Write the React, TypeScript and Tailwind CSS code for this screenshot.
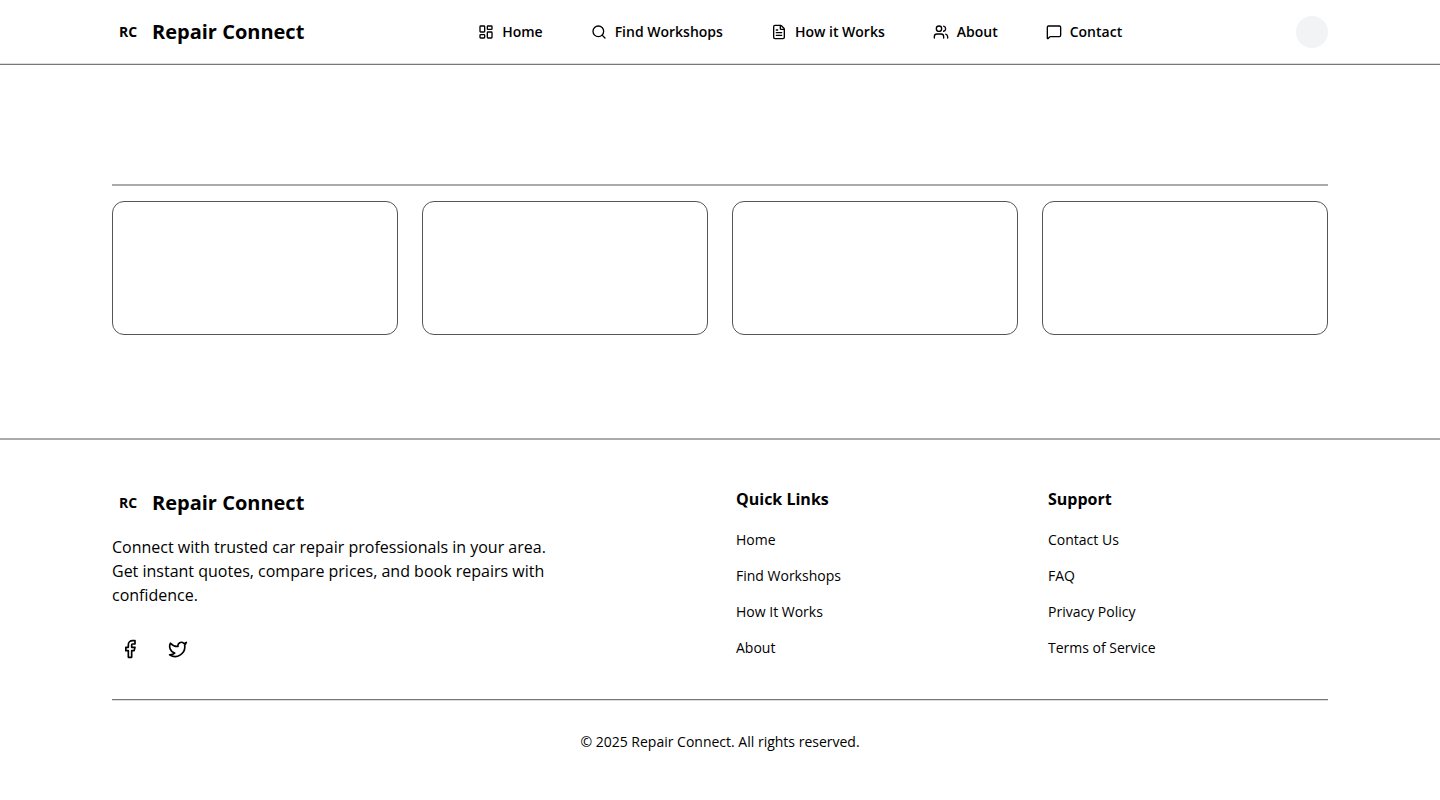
import React from "react";
import {
  LayoutDashboard,
  Search,
  FileText,
  Users,
  MessageSquare,
  Facebook,
  Twitter,
} from "lucide-react";

const navItems = [
  { label: "Home", icon: LayoutDashboard },
  { label: "Find Workshops", icon: Search },
  { label: "How it Works", icon: FileText },
  { label: "About", icon: Users },
  { label: "Contact", icon: MessageSquare },
];

const linkGroups = [
  { title: "Quick Links", links: ["Home", "Find Workshops", "How It Works", "About"] },
  { title: "Support", links: ["Contact Us", "FAQ", "Privacy Policy", "Terms of Service"] },
];

function Brand() {
  return (
    <a href="#" className="flex items-center gap-2">
      <span className="flex size-8 items-center justify-center text-sm font-bold">RC</span>
      <span className="text-xl font-bold">Repair Connect</span>
    </a>
  );
}

export default function App() {
  return (
    <div className="min-h-screen bg-white font-['Open_Sans',sans-serif] text-black">
      <header className="border-b border-[#777777] shadow-[inset_0_-1px_#dddddd]">
        <div className="mx-auto flex h-16 max-w-7xl items-center justify-between px-8">
          <Brand />
          <nav className="flex items-center gap-4">
            {navItems.map(({ label, icon: Icon }) => (
              <a key={label} href="#" className="flex items-center gap-2 px-4 py-2 text-sm font-semibold">
                <Icon className="size-4" />
                {label}
              </a>
            ))}
          </nav>
          <div className="size-8 rounded-full bg-[#f1f3f5]" />
        </div>
      </header>

      <main className="mx-auto max-w-7xl px-8 pt-[119px] pb-[103px]">
        <div className="grid grid-cols-4 gap-6 border-t-2 border-[#aaaaaa] pt-[15px]">
          {[0, 1, 2, 3].map((n) => (
            <div key={n} className="h-[134px] rounded-xl border border-[#555555]" />
          ))}
        </div>
      </main>

      <footer className="border-t-2 border-[#aaaaaa]">
        <div className="mx-auto max-w-7xl px-8 pt-[47px] pb-12">
          <div className="grid grid-cols-4 gap-8">
            <div className="col-span-2">
              <Brand />
              <p className="mt-4 max-w-md">
                Connect with trusted car repair professionals in your area. Get instant quotes,
                compare prices, and book repairs with confidence.
              </p>
              <div className="mt-6 flex gap-3">
                <a href="#" aria-label="Facebook" className="flex size-9 items-center justify-center">
                  <Facebook className="size-5" />
                </a>
                <a href="#" aria-label="Twitter" className="flex size-9 items-center justify-center">
                  <Twitter className="size-5" />
                </a>
              </div>
            </div>
            {linkGroups.map((group) => (
              <div key={group.title}>
                <h3 className="font-bold">{group.title}</h3>
                <ul className="mt-4 space-y-3">
                  {group.links.map((link) => (
                    <li key={link} className="leading-6">
                      <a href="#" className="text-sm">{link}</a>
                    </li>
                  ))}
                </ul>
              </div>
            ))}
          </div>
          <div className="mt-8 border-t border-[#777777] pt-8 text-center text-sm shadow-[inset_0_1px_#dddddd]">
            <p>© 2025 Repair Connect. All rights reserved.</p>
          </div>
        </div>
      </footer>
    </div>
  );
}
